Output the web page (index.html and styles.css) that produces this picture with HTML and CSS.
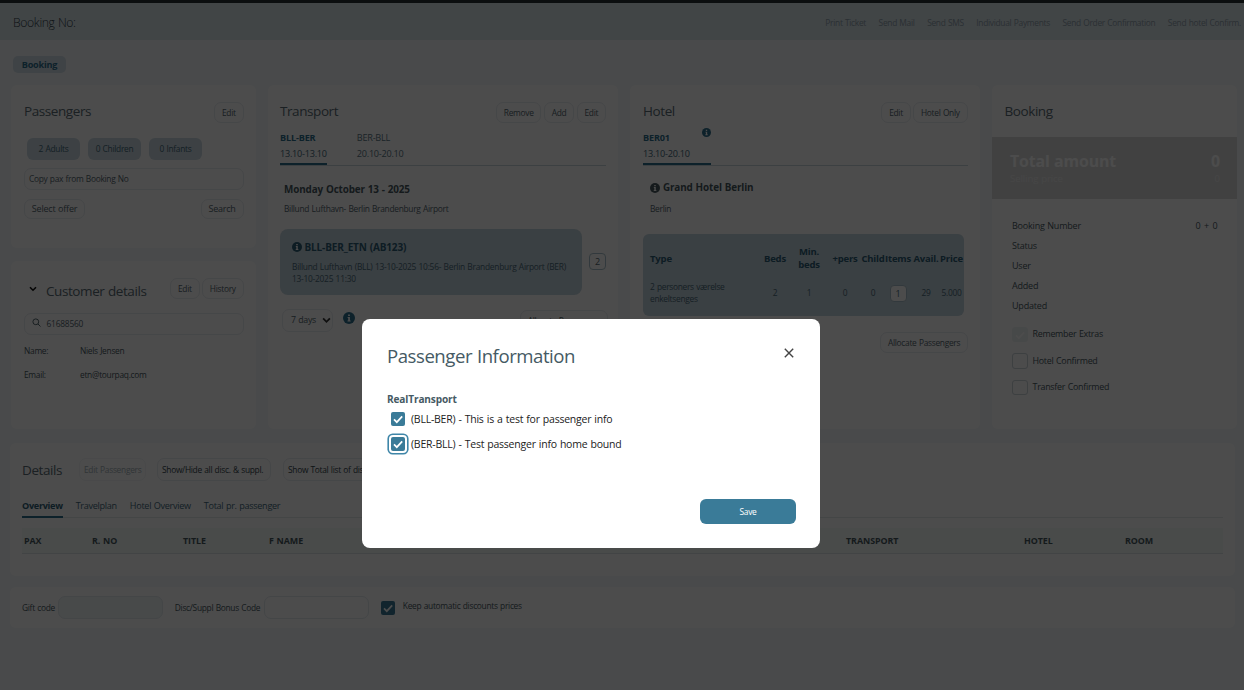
FILE: index.html
```html
<!DOCTYPE html>
<html lang="en">
<head>
<meta charset="utf-8">
<title>Booking</title>
<link rel="stylesheet" href="styles.css">
</head>
<body>
<svg class="defs" aria-hidden="true">
  <symbol id="info" viewBox="0 0 12 12"><circle cx="6" cy="6" r="6" fill="currentColor"/><path d="M5.1 2.4h1.8v1.6H5.1zM4.6 4.9h2.3v3.5h.7v1.1H4.5V8.4h.7V6h-.6z" fill="#fff"/></symbol>
  <symbol id="tick" viewBox="0 0 14 14"><path d="M3 7.4l2.8 2.8L11.2 4.4" fill="none" stroke="#fff" stroke-width="1.7"/></symbol>
  <symbol id="down" viewBox="0 0 8 6"><path d="M1 1.2l3 3 3-3" fill="none" stroke="currentColor" stroke-width="1.6"/></symbol>
</svg>

<div class="app">
  <div class="strip"></div>
  <header class="header">
    <h1>Booking No:</h1>
    <nav>
      <a>Print Ticket</a><a>Send Mail</a><a>Send SMS</a><a>Individual Payments</a><a>Send Order Confirmation</a><a>Send hotel Confirm.</a>
    </nav>
  </header>

  <div class="crumbs"><span class="crumb">Booking</span></div>

  <main class="cards">
    <div class="stack">
      <section class="card passengers">
        <div class="head"><h2>Passengers</h2><button class="btn">Edit</button></div>
        <div class="pills"><span>2 Adults</span><span>0 Children</span><span>0 Infants</span></div>
        <div class="field">Copy pax from Booking No</div>
        <div class="pair"><button class="btn big">Select offer</button><button class="btn big">Search</button></div>
      </section>
      <section class="card customer">
        <div class="head">
          <svg class="chev"><use href="#down"/></svg>
          <h2>Customer details</h2>
          <div class="btns"><button class="btn">Edit</button><button class="btn">History</button></div>
        </div>
        <div class="field search">
          <svg class="glass" viewBox="0 0 9 9"><circle cx="3.8" cy="3.8" r="2.9"/><path d="M6 6l2.5 2.5"/></svg>
          <span>61688560</span>
        </div>
        <dl><dt>Name:</dt><dd>Niels Jensen</dd><dt>Email:</dt><dd>etn@tourpaq.com</dd></dl>
      </section>
    </div>

    <section class="card transport">
      <div class="head"><h2>Transport</h2><div class="btns"><button class="btn">Remove</button><button class="btn">Add</button><button class="btn">Edit</button></div></div>
      <div class="tabs">
        <div class="tab on"><b>BLL-BER</b><span>13.10-13.10</span></div>
        <div class="tab"><i>BER-BLL</i><span>20.10-20.10</span></div>
      </div>
      <h3>Monday October 13 - 2025</h3>
      <p class="route">Billund Lufthavn- Berlin Brandenburg Airport</p>
      <div class="flightrow">
        <div class="flight">
          <h4><svg class="inf10"><use href="#info"/></svg>BLL-BER_ETN (AB123)</h4>
          <p>Billund Lufthavn (BLL) 13-10-2025 10:56- Berlin Brandenburg Airport (BER)<br>13-10-2025 11:30</p>
        </div>
        <span class="num">2</span>
      </div>
      <div class="stay">
        <span class="select">7 days<svg class="chev"><use href="#down"/></svg></span>
        <svg class="inf12"><use href="#info"/></svg>
        <button class="btn">Allocate Passengers</button>
      </div>
    </section>

    <section class="card hotel">
      <div class="head"><h2>Hotel</h2><div class="btns"><button class="btn">Edit</button><button class="btn">Hotel Only</button></div></div>
      <div class="tabs">
        <div class="tab on wide"><b>BER01</b><svg class="inf9"><use href="#info"/></svg><span>13.10-20.10</span></div>
      </div>
      <h3><svg class="inf10"><use href="#info"/></svg>Grand Hotel Berlin</h3>
      <p class="route">Berlin</p>
      <div class="rooms">
        <b class="l">Type</b><b>Beds</b><b>Min.<br>beds</b><b>+pers</b><b>Child</b><b>Items</b><b>Avail.</b><b>Price</b>
        <span class="l">2 personers værelse<br>enkeltsenges</span><span>2</span><span>1</span><span>0</span><span>0</span><span><em class="num">1</em></span><span>29</span><span>5.000</span>
      </div>
      <div class="foot"><button class="btn">Allocate Passengers</button></div>
    </section>

    <section class="card booking">
      <div class="head"><h2>Booking</h2></div>
      <div class="total">
        <div class="t1"><span>Total amount</span><span>0</span></div>
        <div class="t2"><span>Selling price</span><span>0</span></div>
      </div>
      <ul class="facts">
        <li><span>Booking Number</span><span class="count">0 + 0</span></li><li>Status</li><li>User</li><li>Added</li><li>Updated</li>
      </ul>
      <label class="opt"><span class="cb off"><svg><use href="#tick"/></svg></span>Remember Extras</label>
      <label class="opt"><span class="cb"></span>Hotel Confirmed</label>
      <label class="opt"><span class="cb"></span>Transfer Confirmed</label>
    </section>
  </main>

  <section class="card details">
    <div class="dhead">
      <h2>Details</h2>
      <button class="btn dim">Edit Passengers</button><button class="btn">Show/Hide all disc. &amp; suppl.</button><button class="btn">Show Total list of disc.</button>
    </div>
    <div class="dtabs"><b>Overview</b><a>Travelplan</a><a>Hotel Overview</a><a>Total pr. passenger</a></div>
    <div class="thead"><b>PAX</b><b>R. NO</b><b>TITLE</b><b>F NAME</b><b>TRANSPORT</b><b>HOTEL</b><b>ROOM</b></div>
  </section>

  <section class="card codes">
    <label>Gift code</label><span class="input tint"></span>
    <label class="bonus">Disc/Suppl Bonus Code</label><span class="input"></span>
    <span class="check"><svg><use href="#tick"/></svg></span><span class="keep">Keep automatic discounts prices</span>
  </section>
</div>

<div class="overlay">
  <div class="modal" role="dialog">
    <div class="mhead">
      <h2>Passenger Information</h2>
      <svg class="close" viewBox="0 0 10 10"><path d="M.8.8l8.4 8.4M9.2.8L.8 9.2"/></svg>
    </div>
    <h3>RealTransport</h3>
    <label class="row"><span class="check"><svg><use href="#tick"/></svg></span>(BLL-BER) - This is a test for passenger info</label>
    <label class="row r2"><span class="check focus"><svg><use href="#tick"/></svg></span>(BER-BLL) - Test passenger info home bound</label>
    <div class="mfoot"><button class="save">Save</button></div>
  </div>
</div>
</body>
</html>
```
FILE: styles.css
```css
* { box-sizing: border-box; margin: 0; padding: 0; }
html, body { height: 690px; overflow: hidden; }
body {
  background: #f6f8fb;
  color: #54666f;
  font: 8.4px/12px "Open Sans", "Noto Sans", sans-serif;
  letter-spacing: -0.29px;
  word-spacing: 0.5px;
}
h1, h2, h3, h4 { font-weight: 400; }
button { font: inherit; letter-spacing: inherit; word-spacing: inherit; color: inherit; }
ul { list-style: none; }
i, em { font-style: normal; }
.defs { position: absolute; width: 0; height: 0; }
.app { height: 690px; overflow: hidden; }
.strip { height: 3px; background: #272f35; }

.header { height: 37px; background: #dbe6ec; display: flex; justify-content: space-between; align-items: center; padding: 0 3px 0 13px; }
.header h1 { font-size: 12.2px; font-weight: 300; letter-spacing: -0.36px; line-height: 16px; margin-top: 3px; color: #2f4149; }
.header nav { display: flex; gap: 12.5px; margin-top: 2px; color: #8fa1ab; white-space: nowrap; }

.crumbs { height: 45px; padding: 16px 0 0 13px; }
.crumb { display: block; width: 53px; height: 17px; border-radius: 5px; background: #d3e0e9; color: #2d6f8e; font-weight: 700; font-size: 9.1px; line-height: 17px; letter-spacing: -0.2px; text-align: center; }

.cards { display: grid; grid-template-columns: 245px 350px 350px 245px; gap: 12px; padding-left: 11px; height: 344px; }
.card { background: #fff; border-radius: 6px; }
.stack { display: grid; grid-template-rows: 163px 168px; gap: 13px; }
.head { display: flex; justify-content: space-between; align-items: flex-start; }
.head h2, .dhead h2 { font-size: 13.5px; line-height: 18px; letter-spacing: -0.42px; color: #5a6c75; }
.btn { height: 21px; padding: 0 6.8px; border: 1px solid #e8edf0; border-radius: 7px; background: none; line-height: 19px; white-space: nowrap; }
.btns { display: flex; gap: 2.5px; }

.passengers, .customer, .transport, .hotel, .booking { padding: 17px 12.5px 0 13px; }
.pills { display: flex; gap: 8px; margin: 14.5px 0 0 3px; }
.pills span { width: 53px; height: 22px; border-radius: 6px; background: #cbdae4; color: #45697b; line-height: 22px; text-align: center; }
.field { height: 22px; margin-top: 8.5px; padding-left: 4px; border: 1px solid #e8edf0; border-radius: 7px; line-height: 20px; }
.pair { display: flex; justify-content: space-between; margin-top: 9px; }
.btn.big { height: 20px; font-size: 9px; letter-spacing: -0.2px; line-height: 18px; }

.customer .head { justify-content: flex-start; }
.customer .head .chev { width: 8px; height: 6px; margin: 8px 9px 0 5px; color: #111; }
.customer .head h2 { margin-top: 3.5px; }
.customer .btns { margin-left: auto; }
.customer .field { margin-top: 13px; display: flex; padding-left: 7px; letter-spacing: -0.2px; }
.glass { width: 9px; height: 9px; margin: 4.5px 5.5px 0 0; fill: none; stroke: #566870; stroke-width: 1; }
dl { display: grid; grid-template-columns: 56px 1fr; row-gap: 12px; margin-top: 10.5px; color: #48595f; }

.tabs { display: flex; gap: 30px; margin-top: 7px; height: 36px; border-bottom: 1px solid #c9d5dc; color: #5a7684; }
.transport .tabs { width: 326px; margin-left: -1px; }
.hotel .tabs { width: 325px; }
.transport .head { margin-left: -1px; }
.tab { display: block; height: 35px; font-size: 9.1px; letter-spacing: -0.23px; position: relative; }
.tab b, .tab i, .tab span { display: block; line-height: 15.5px; }
.tab.on { border-bottom: 2px solid #2d6f8e; color: #45697b; }
.tab b { color: #2d6f8e; letter-spacing: -0.15px; }
.tab.wide { width: 68px; }
.inf9 { position: absolute; right: 0; top: -2px; width: 9px; height: 9px; color: #2d6f8e; }
.inf10 { width: 10px; height: 10px; margin-right: 3px; vertical-align: -1.5px; }
.inf12 { width: 12px; height: 12px; color: #2d6f8e; }
.card h3 { font-size: 9.9px; font-weight: 700; line-height: 14px; letter-spacing: -0.13px; margin: 15.5px 0 0 3px; color: #48595f; }
.route { margin: 7px 0 0 3px; }
.transport { padding-right: 12px; }
.flightrow { display: flex; align-items: center; justify-content: space-between; margin: 14px 0 0 -1px; }
.flight { width: 302px; height: 66px; border-radius: 8px; background: #c4d5df; padding: 12px 12px 0; color: #4a6b7b; line-height: 12px; letter-spacing: -0.25px; white-space: nowrap; }
.flight h4 { font-size: 10px; font-weight: 700; line-height: 13px; letter-spacing: -0.14px; color: #2d5e76; margin-bottom: 7px; }
.flight .inf10 { margin-right: 2.5px; }
.num { display: inline-block; width: 17px; height: 17px; border: 1px solid #a9c0cc; border-radius: 4px; background: #fff; text-align: center; line-height: 15px; font-size: 9px; }
.stay { display: flex; margin: 14px -2px 0 1px; }
.select { width: 51px; height: 23px; border: 1px solid #e8edf0; border-radius: 7px; padding-left: 8px; line-height: 21px; font-size: 8.8px; }
.select .chev { width: 9px; height: 7px; margin-left: 6px; vertical-align: -1px; color: #333; }
.stay .inf12 { margin: 3.5px 0 0 9.5px; }
.stay .btn { margin: 1px 0 0 auto; padding: 0 7px; }

.hotel h3 { margin: 14px 0 0 7px; }
.hotel .route { margin: 8.5px 0 0 7px; }
.rooms { display: grid; grid-template-columns: 116px 32px 36px 36px 20px 30px 26px 25px; grid-template-rows: 25px 36px; align-items: center; margin-top: 19px; width: 321px; height: 82px; padding-top: 12px; border-radius: 6px; background: #c4d5df; color: #4a6b7b; text-align: center; align-content: start; }
.rooms b { font-size: 9.5px; line-height: 13px; letter-spacing: -0.17px; color: #2d5e76; white-space: nowrap; }
.rooms b:nth-child(n+4) { justify-self: center; }
.rooms span { padding-top: 9px; }
.rooms .l { text-align: left; padding-left: 7px; }
.foot { display: flex; justify-content: flex-end; margin: 16px -0.5px 0 0; }

.booking { padding: 17px 0 0; }
.booking .head { padding-left: 12.5px; }
.total { height: 62px; margin-top: 17px; background: #dadada; color: #fff; padding: 13px 17px 0 18px; }
.t1, .t2 { display: flex; justify-content: space-between; }
.t1 { font-size: 15.9px; font-weight: 700; line-height: 22px; letter-spacing: -0.15px; }
.t2 { font-size: 9.6px; line-height: 14px; letter-spacing: -0.1px; color: #ebebeb; }
.facts { padding: 17px 19.5px 0 20px; font-size: 9px; letter-spacing: -0.2px; line-height: 20px; color: #48595f; }
.facts li { display: flex; justify-content: space-between; }
.count { word-spacing: 1.4px; }
.opt { display: flex; align-items: center; height: 26.5px; padding-left: 20px; font-size: 8.9px; letter-spacing: -0.26px; color: #48595f; }
.facts + .opt { margin-top: 5px; }
.cb { width: 15.5px; height: 15.5px; border: 1px solid #ccd5da; border-radius: 3px; margin-right: 5px; }
.cb.off { background: #eff3f4; border-color: #eff3f4; }
.cb svg { display: block; width: 14px; height: 14px; }

.details { margin: 14px 9px 0 10px; height: 133px; padding: 15px 12px 0; }
.dhead { display: flex; align-items: flex-start; }
.dhead h2 { width: 57px; margin-top: 3px; }
.dhead .btn { width: 114px; height: 23px; padding: 0 4px; line-height: 21px; margin-right: 12px; color: #33444c; text-align: left; }
.dhead .btn.dim { width: 67px; margin-right: 11px; color: #a3b0b7; border-color: #f3f5f7; }
.dtabs { display: flex; gap: 13px; margin-top: 17.5px; height: 19.5px; border-bottom: 1px solid #e3e9ec; font-size: 9.1px; letter-spacing: -0.3px; color: #43697c; }
.dtabs b { height: 19px; border-bottom: 2px solid #2d6f8e; color: #2d5e76; line-height: 13px; }
.dtabs a { line-height: 13px; }
.thead { display: grid; grid-template-columns: 68px 91px 86px 577px 178px 101px 1fr; margin-top: 10px; height: 26px; padding-left: 2px; border-bottom: 1px solid #dde5e8; background: #f5faf9; line-height: 26px; font-size: 8.9px; letter-spacing: -0.05px; color: #48595f; }

.codes { display: flex; align-items: center; margin: 11px 9px 0 10px; height: 41px; padding-left: 12px; color: #48595f; }
.codes label { width: 36.3px; white-space: nowrap; }
.codes .bonus { width: 89px; margin-left: 11.5px; }
.input { width: 105px; height: 23px; border: 1px solid #e3eaee; border-radius: 7px; }
.tint { background: #f1f8f8; }
.check { display: block; width: 14px; height: 14px; border-radius: 2px; background: #3a7b98; flex: none; }
.check svg { display: block; width: 14px; height: 14px; }
.codes .check { margin-left: 12px; }
.keep { margin: -4px 0 0 8px; }

.overlay { position: fixed; inset: 0; background: rgba(0, 0, 0, .7); padding: 319px 0 0 362.4px; }
.modal { width: 458px; height: 229px; border-radius: 8px; background: #fff; padding: 24px 24.4px 0 24.6px; }
.mhead { display: flex; justify-content: space-between; }
.mhead h2 { font-size: 18.6px; line-height: 26px; letter-spacing: -0.46px; color: #455a64; }
.close { width: 10px; height: 10px; margin: 5px 2.5px 0 0; stroke: #444; stroke-width: 1.4; fill: none; }
.modal h3 { margin-top: 22.5px; font-size: 10.1px; line-height: 14px; font-weight: 700; letter-spacing: -0.14px; color: #455a64; }
.row { display: flex; align-items: center; gap: 6px; height: 14px; margin: 6.5px 0 0 4px; line-height: 13px; font-size: 10.5px; letter-spacing: -0.23px; word-spacing: 0.6px; color: #222; }
.row.r2 { margin-top: 11px; }
.focus { box-shadow: 0 0 0 2px #fff, 0 0 0 3.6px #3f86a8; }
.mfoot { display: flex; justify-content: flex-end; margin-top: 48px; }
.save { width: 96px; height: 25px; border: 0; border-radius: 6px; background: #3a7b98; color: #fff; }
```
